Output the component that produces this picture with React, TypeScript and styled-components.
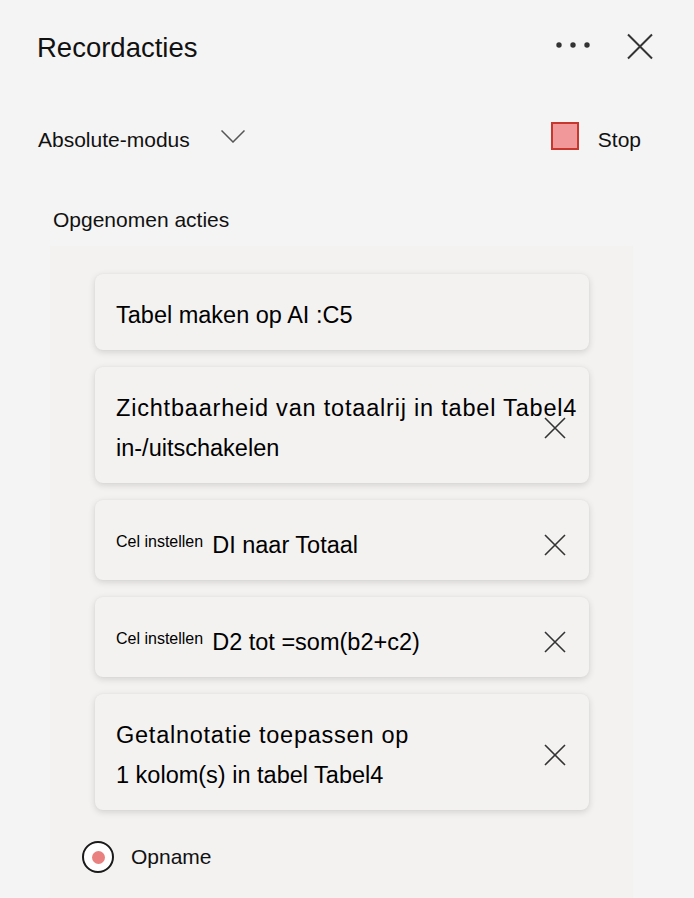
import React from "react";
import styled, { createGlobalStyle } from "styled-components";

const GlobalStyle = createGlobalStyle`
  html, body {
    margin: 0;
    padding: 0;
    background: #f4f4f4;
  }
  body {
    font-family: "Liberation Sans", Arial, sans-serif;
    color: #111;
  }
  * { box-sizing: border-box; }
`;

const Pane = styled.div`
  width: 694px;
  min-height: 100vh;
  display: flex;
  flex-direction: column;
  background: #f4f4f4;
`;

const Header = styled.div`
  display: flex;
  align-items: center;
  justify-content: space-between;
  height: 32px;
  margin-top: 32px;
  padding: 0 41px 0 37px;
`;

const Title = styled.h1`
  margin: 0;
  font-size: 27.5px;
  font-weight: 400;
  line-height: 32px;
  color: #111;
`;

const HeaderTools = styled.div`
  display: flex;
  align-items: center;
  gap: 37px;
`;

const IconButton = styled.button`
  border: none;
  background: none;
  padding: 0;
  margin: 0;
  display: flex;
  cursor: pointer;
`;

const ModeRow = styled.div`
  display: flex;
  align-items: flex-start;
  justify-content: space-between;
  height: 36px;
  margin-top: 58px;
  padding: 0 53px 0 38px;
`;

const ModeGroup = styled.div`
  display: flex;
  align-items: flex-start;
  gap: ${(p: { $gap: number }) => p.$gap}px;
`;

const ModeLabel = styled.span`
  font-size: 21px;
  line-height: 36px;
  white-space: nowrap;
`;

const Chevron = styled.svg`
  margin-top: 8px;
`;

const StopSquare = styled.span`
  display: block;
  width: 28px;
  height: 28px;
  background: #f0989a;
  border: 2.5px solid #c8372d;
`;

const SectionLabel = styled.div`
  margin: 49px 0 0 53px;
  font-size: 21px;
  line-height: 26px;
`;

const ActionList = styled.div`
  flex: 1;
  margin: 13px 0 0 50px;
  width: 583px;
  padding: 28px 0 40px 32px;
  background: #f3f2f1;
`;

const CardStack = styled.div`
  display: flex;
  flex-direction: column;
  gap: 17px;
  width: 494px;
  margin-left: 13px;
`;

const Card = styled.div<{ $labelled?: boolean }>`
  display: grid;
  grid-template-columns: minmax(0, 1fr);
  padding: ${(p) => (p.$labelled ? "25px" : "21px")} 23px 15px 21px;
  background: #f3f2f1;
  border-radius: 8px;
  box-shadow: 0 2px 7px rgba(0, 0, 0, 0.14), 0 0 2px rgba(0, 0, 0, 0.04);
`;

const CardText = styled.div`
  grid-area: 1 / 1;
  min-width: 0;
`;

const Line = styled.div<{ $track?: number }>`
  font-size: 23.5px;
  line-height: 40px;
  white-space: nowrap;
  letter-spacing: ${(p) => p.$track ?? 0}px;
  color: #000;
`;

const SmallLabel = styled.span`
  font-size: 16px;
  line-height: 1;
  vertical-align: 6px;
  margin-right: 9px;
`;

const RemoveButton = styled(IconButton)`
  grid-area: 1 / 1;
  justify-self: end;
  align-self: center;
`;

const RecordRow = styled.div`
  display: flex;
  align-items: center;
  gap: 17px;
  margin-top: 30px;
`;

const RecordDot = styled.span`
  width: 32px;
  height: 32px;
  border-radius: 50%;
  border: 2.5px solid #1a1a1a;
  background: #fff;
  display: flex;
  align-items: center;
  justify-content: center;
  &::after {
    content: "";
    width: 13px;
    height: 13px;
    border-radius: 50%;
    background: #e8817f;
  }
`;

const RecordLabel = styled.span`
  font-size: 21px;
  line-height: 34px;
`;

const MoreIcon = () => (
  <svg width="34" height="32" viewBox="0 0 34 32">
    <circle cx="3" cy="13" r="2.7" fill="#333" />
    <circle cx="17" cy="13" r="2.7" fill="#333" />
    <circle cx="31" cy="13" r="2.7" fill="#333" />
  </svg>
);

const CloseIcon = ({ size, stroke }: { size: number; stroke: number }) => (
  <svg width={size} height={size} viewBox={`0 0 ${size} ${size}`}>
    <path
      d={`M1 1L${size - 1} ${size - 1}M${size - 1} 1L1 ${size - 1}`}
      stroke="#333"
      strokeWidth={stroke}
      fill="none"
    />
  </svg>
);

type Action = {
  lines?: { text: string; track?: number }[];
  label?: string;
  value?: string;
  removable: boolean;
};

const actions: Action[] = [
  { lines: [{ text: "Tabel maken op AI :C5" }], removable: false },
  {
    lines: [
      { text: "Zichtbaarheid van totaalrij in tabel Tabel4", track: 0.8 },
      { text: "in-/uitschakelen" },
    ],
    removable: true,
  },
  { label: "Cel instellen", value: "DI naar Totaal", removable: true },
  { label: "Cel instellen", value: "D2 tot =som(b2+c2)", removable: true },
  {
    lines: [
      { text: "Getalnotatie toepassen op", track: 0.75 },
      { text: "1 kolom(s) in tabel Tabel4" },
    ],
    removable: true,
  },
];

const App = () => {
  return (
    <Pane>
      <GlobalStyle />
      <Header>
        <Title>Recordacties</Title>
        <HeaderTools>
          <IconButton aria-label="Meer opties">
            <MoreIcon />
          </IconButton>
          <IconButton aria-label="Sluiten">
            <svg width="26" height="32" viewBox="0 0 26 32">
              <path d="M1 2.5L25 26.5M25 2.5L1 26.5" stroke="#333" strokeWidth="2" fill="none" />
            </svg>
          </IconButton>
        </HeaderTools>
      </Header>

      <ModeRow>
        <ModeGroup $gap={31}>
          <ModeLabel>Absolute-modus</ModeLabel>
          <Chevron width="24" height="13" viewBox="0 0 24 13">
            <path d="M0.5 0.5L12 12L23.5 0.5" stroke="#555" strokeWidth="1.5" fill="none" />
          </Chevron>
        </ModeGroup>
        <ModeGroup $gap={19}>
          <StopSquare />
          <ModeLabel>Stop</ModeLabel>
        </ModeGroup>
      </ModeRow>

      <SectionLabel>Opgenomen acties</SectionLabel>

      <ActionList>
        <CardStack>
          {actions.map((a, i) => (
            <Card key={i} $labelled={!!a.label}>
              <CardText>
                {a.label ? (
                  <Line>
                    <SmallLabel>{a.label}</SmallLabel>
                    {a.value}
                  </Line>
                ) : (
                  a.lines!.map((l) => (
                    <Line key={l.text} $track={l.track}>
                      {l.text}
                    </Line>
                  ))
                )}
              </CardText>
              {a.removable && (
                <RemoveButton aria-label="Verwijderen">
                  <CloseIcon size={22} stroke={1.6} />
                </RemoveButton>
              )}
            </Card>
          ))}
        </CardStack>
        <RecordRow>
          <RecordDot />
          <RecordLabel>Opname</RecordLabel>
        </RecordRow>
      </ActionList>
    </Pane>
  );
};

export default App;
